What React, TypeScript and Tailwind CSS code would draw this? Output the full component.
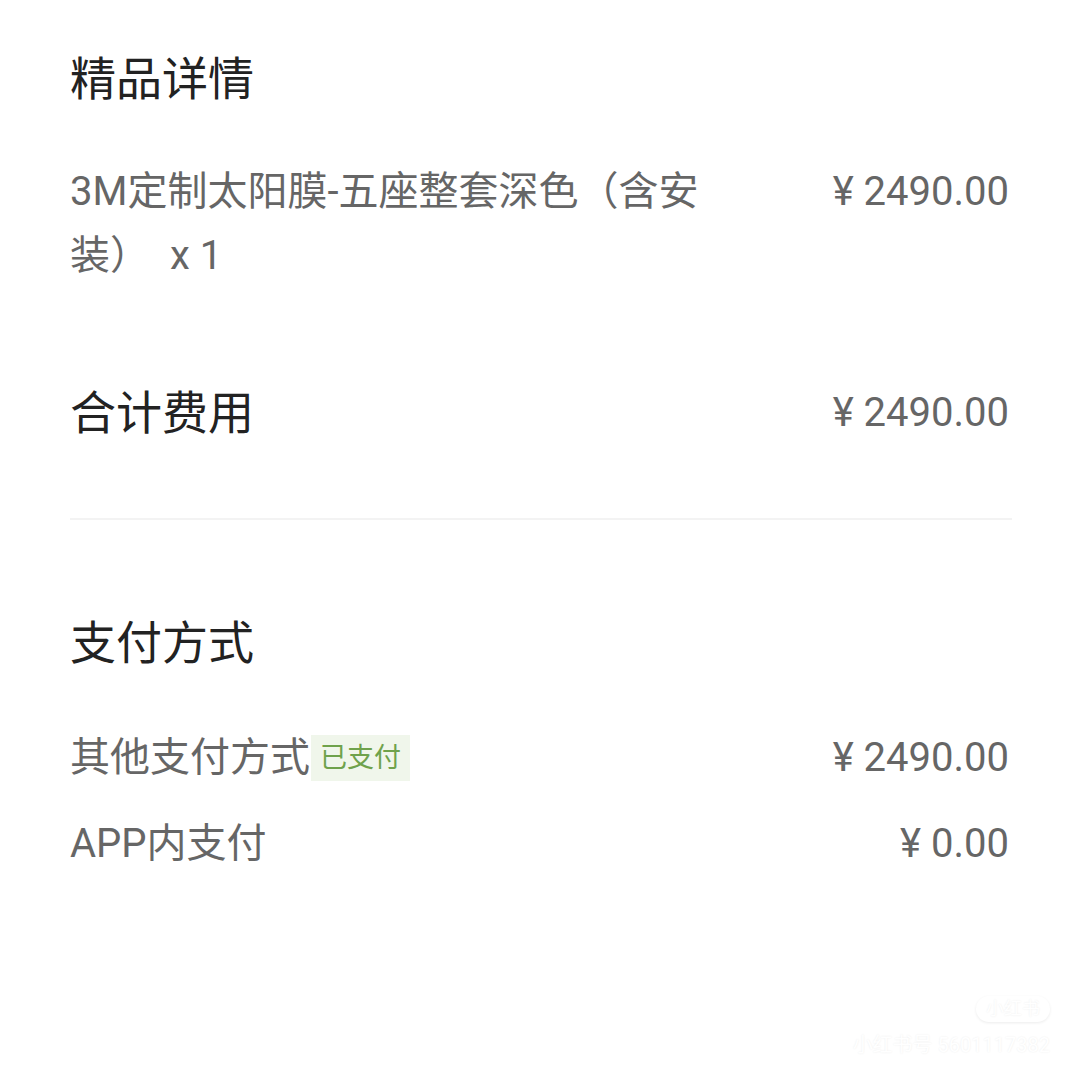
const font = { fontFamily: 'Roboto, "Noto Sans CJK SC", sans-serif' }

function Row({ label, amount, children }: { label: string; amount: string; children?: React.ReactNode }) {
  return (
    <div className="flex items-center justify-between text-[40px] leading-[64px] text-[#666]">
      <div className="flex items-center">
        <span>{label}</span>
        {children}
      </div>
      <span>{amount}</span>
    </div>
  )
}

export default function App() {
  return (
    <div className="relative h-[1078px] w-[1080px] overflow-hidden bg-white" style={font}>
      <div className="pl-[70px] pr-[71px] pt-[49px]">
        {/* 精品详情 */}
        <h2 className="text-[46px] leading-[60px] font-normal text-[#222]">精品详情</h2>
        <div className="mt-[51px] flex items-start justify-between text-[40px] leading-[64px] text-[#666]">
          <p className="w-[660px]">
            3M定制太阳膜-五座整套深色（含安装）<span className="ml-[20px]">x 1</span>
          </p>
          <span>¥ 2490.00</span>
        </div>

        {/* 合计费用 */}
        <div className="mt-[95px] flex items-center justify-between">
          <h2 className="text-[46px] leading-[60px] font-normal text-[#222]">合计费用</h2>
          <span className="text-[40px] text-[#666]">¥ 2490.00</span>
        </div>

        <div className="mt-[75px] mr-[-3px] h-[2px] bg-[#f3f3f3]" />

        {/* 支付方式 */}
        <h2 className="mt-[93px] text-[46px] leading-[60px] font-normal text-[#222]">支付方式</h2>
        <div className="mt-[53px]">
          <Row label="其他支付方式" amount="¥ 2490.00">
            <span className="ml-[1px] flex h-[46px] items-center bg-[#f0f6eb] px-[9px] text-[27px] text-[#6fa24c]">
              已支付
            </span>
          </Row>
        </div>
        <div className="mt-[22px]">
          <Row label="APP内支付" amount="¥ 0.00" />
        </div>
      </div>

      {/* 水印 */}
      <div className="pointer-events-none absolute right-[30px] bottom-[20px] flex flex-col items-end gap-[10px] text-white" style={{ textShadow: '0 0 2px rgba(0,0,0,0.08)' }}>
        <span className="rounded-full px-[10px] text-[18px] leading-[26px]" style={{ boxShadow: '0 1px 3px rgba(0,0,0,0.08)' }}>
          小红书
        </span>
        <span className="text-[20px] leading-[26px]">小红书号 5601117382</span>
      </div>
    </div>
  )
}
